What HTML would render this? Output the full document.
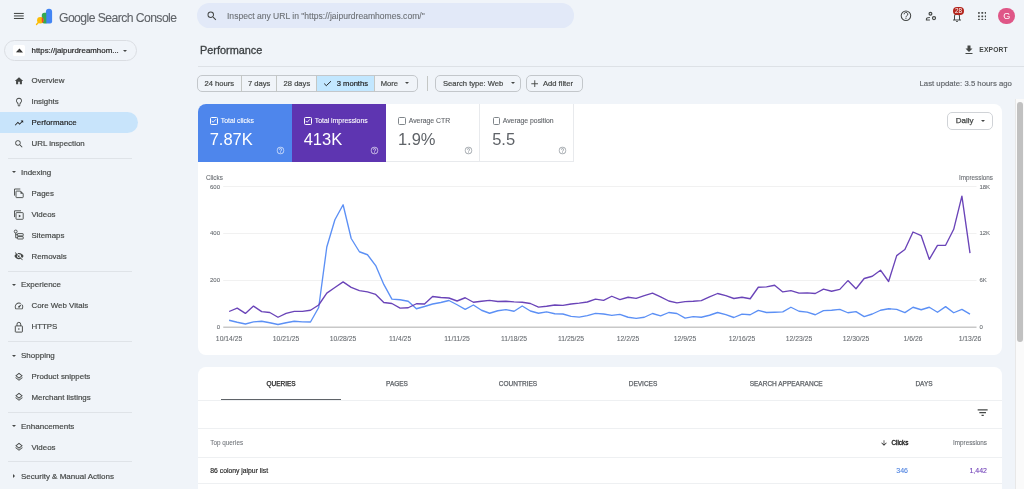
<!DOCTYPE html>
<html><head><meta charset="utf-8">
<style>
*{box-sizing:border-box;margin:0;padding:0}
html,body{width:1024px;height:489px;overflow:hidden;background:#f0f4f9;font-family:"Liberation Sans",sans-serif;color:#1f1f1f}
.a{position:absolute;white-space:nowrap}
.nav{font-size:7.9px;color:#444746;left:31.5px;line-height:10px;-webkit-text-stroke:0.18px currentColor}
.navi{position:absolute;left:13.9px;width:10px;height:10px}
.sec{font-size:8px;color:#444746;left:21px;line-height:10px;-webkit-text-stroke:0.18px currentColor}
.tri{position:absolute;left:11.5px;width:0;height:0;border-left:2.2px solid transparent;border-right:2.2px solid transparent;border-top:2.4px solid #444746}
.div{position:absolute;left:8px;width:124px;height:1px;background:#dfe3e8}
.chip{position:absolute;top:75px;height:16.5px;border:1px solid #c3c7cb;border-radius:5px;background:#f0f4f9}
.ct{font-size:7.6px;color:#444746;line-height:14.5px;-webkit-text-stroke:0.2px currentColor}
.card{position:absolute;background:#fff;border-radius:8px}
.mlab{font-size:6.85px;line-height:9px;-webkit-text-stroke:0.1px currentColor}
.mval{font-size:16.5px;line-height:18px}
.ylab{font-size:6px;color:#6a6e73;line-height:8px;-webkit-text-stroke:0.1px currentColor}
.xlab{font-size:6.8px;color:#6a6e73;line-height:8px;-webkit-text-stroke:0.1px currentColor}
.tab{font-size:6.5px;color:#5f6368;line-height:8px;-webkit-text-stroke:0.25px currentColor}
#root{position:absolute;left:0;top:0;width:1024px;height:489px;overflow:hidden;will-change:transform}
</style></head><body><div id="root">
<!-- top bar -->
<svg class="a" style="left:0;top:0" width="32" height="32" viewBox="0 0 32 32"><g stroke="#444746" stroke-width="1.05"><line x1="13.93" y1="13.44" x2="23.73" y2="13.44"/><line x1="13.93" y1="15.93" x2="23.73" y2="15.93"/><line x1="13.93" y1="18.47" x2="23.73" y2="18.47"/></g></svg>
<svg class="a" style="left:34px;top:6px" width="20" height="20" viewBox="34 6 20 20">
 <defs><clipPath id="gc"><path d="M44.3 12.8H46.3V23.6H44.3A2.5 2.5 0 0 1 41.8 21.1V15.3A2.5 2.5 0 0 1 44.3 12.8z"/></clipPath></defs>
 <path d="M45.9 11.8A3.1 3.1 0 0 1 52.1 11.8V21.6A2 2 0 0 1 50.1 23.6H45.9z" fill="#4285f4"/>
 <path d="M44.3 12.8H46.3V23.6H44.3A2.5 2.5 0 0 1 41.8 21.1V15.3A2.5 2.5 0 0 1 44.3 12.8z" fill="#34a853"/>
 <line x1="36.5" y1="24.5" x2="38.4" y2="22.6" stroke="#fbbc04" stroke-width="1.4" stroke-linecap="round"/>
 <circle cx="40.3" cy="20.2" r="3.2" fill="#fbbc04"/>
 <circle cx="40.3" cy="20.2" r="3.2" fill="#ea4335" clip-path="url(#gc)"/>
</svg>
<div class="a" style="left:59px;top:11px;font-size:12.2px;letter-spacing:-0.57px;color:#5f6368;line-height:14px;-webkit-text-stroke:0.1px currentColor">Google Search Console</div>
<div class="a" style="left:197px;top:3.4px;width:377.3px;height:24.7px;border-radius:12.35px;background:#e2e9f8"></div>
<svg class="a" style="left:206px;top:10.4px" width="12" height="12" viewBox="0 0 24 24"><path d="M15.5 14h-.79l-.28-.27A6.47 6.47 0 0 0 16 9.5 6.5 6.5 0 1 0 9.5 16c1.61 0 3.09-.59 4.23-1.57l.27.28v.79l5 4.99L20.49 19l-4.99-5zm-6 0C7.01 14 5 11.99 5 9.5S7.01 5 9.5 5 14 7.01 14 9.5 11.99 14 9.5 14z" fill="#444746"/></svg>
<div class="a" style="left:227px;top:10.5px;font-size:8.56px;color:#6c7075;line-height:11px;-webkit-text-stroke:0.1px currentColor">Inspect any URL in "https://jaipurdreamhomes.com/"</div>
<!-- right icons -->
<svg class="a" style="left:898px;top:8px" width="16" height="16" viewBox="898 8 16 16"><circle cx="905.95" cy="15.8" r="4.75" fill="none" stroke="#444746" stroke-width="1.05"/><path d="M904.1 14.3a1.85 1.85 0 1 1 2.6 1.65c-.5.25-.75.6-.75 1.2v.3" fill="none" stroke="#444746" stroke-width="0.95"/><circle cx="905.95" cy="18.5" r="0.6" fill="#444746"/></svg>
<svg class="a" style="left:924px;top:9px" width="14" height="13" viewBox="924 9 14 13"><g fill="none" stroke="#444746"><circle cx="930.45" cy="13.75" r="1.4" stroke-width="1.2"/><path d="M929.9 17.4c-1.9 0-3.5.6-3.5 1.6v.9h3.5" stroke-width="1.05"/><circle cx="934" cy="18.1" r="1.55" stroke-width="1.15"/></g></svg>
<svg class="a" style="left:950.5px;top:10.5px" width="12" height="12" viewBox="0 0 24 24"><path d="M12 22c1.1 0 2-.9 2-2h-4c0 1.1.89 2 2 2zm6-6v-5c0-3.07-1.64-5.64-4.5-6.32V4c0-.83-.67-1.5-1.5-1.5s-1.5.67-1.5 1.5v.68C7.630 5.36 6 7.92 6 11v5l-2 2v1h16v-1l-2-2zm-2 1H8v-6c0-2.48 1.51-4.5 4-4.5s4 2.02 4 4.5v6z" fill="#444746"/></svg>
<div class="a" style="left:953px;top:7px;width:11.2px;height:7.8px;border-radius:3.9px;background:#b3261e;color:#fff;font-size:6.3px;line-height:7.8px;text-align:center">28</div>
<svg class="a" style="left:977.6px;top:11.5px" width="8.6" height="8.6" viewBox="0 0 8.6 8.6"><g fill="#444746"><rect x="0" y="0" width="1.8" height="1.8" rx="0.4"/><rect x="3.4" y="0" width="1.8" height="1.8" rx="0.4"/><rect x="6.8" y="0" width="1.8" height="1.8" rx="0.4"/><rect x="0" y="3.4" width="1.8" height="1.8" rx="0.4"/><rect x="3.4" y="3.4" width="1.8" height="1.8" rx="0.4"/><rect x="6.8" y="3.4" width="1.8" height="1.8" rx="0.4"/><rect x="0" y="6.8" width="1.8" height="1.8" rx="0.4"/><rect x="3.4" y="6.8" width="1.8" height="1.8" rx="0.4"/><rect x="6.8" y="6.8" width="1.8" height="1.8" rx="0.4"/></g></svg>
<div class="a" style="left:998.3px;top:7.7px;width:16.8px;height:16.8px;border-radius:50%;background:#df5687;color:#fff;font-size:9px;line-height:16.8px;text-align:center">G</div>

<!-- sidebar -->
<div class="a" style="left:4.1px;top:40px;width:133.4px;height:21.3px;border:1px solid #dadde2;border-radius:10.6px"></div>
<div class="a" style="left:13px;top:45px;width:12px;height:11px;background:#fff;border-radius:1.5px"></div>
<svg class="a" style="left:15px;top:47px" width="9" height="7" viewBox="0 0 9 7"><path d="M0.9 5.2L3.3 2.8 4.3 1.5 5.4 2.5 8 5.4 6 5.6z" fill="#333"/><path d="M3.6 3.2L5.2 5.3" stroke="#888" stroke-width="0.5"/></svg>
<div class="a nav" style="top:45.5px;color:#1f1f1f">https://jaipurdreamhom...</div>
<div class="tri" style="left:122.5px;top:49.5px;border-top-color:#444746;border-left-width:2.6px;border-right-width:2.6px;border-top-width:2.8px"></div>

<div class="a" style="left:0;top:112.2px;width:138px;height:20.9px;border-radius:0 10.5px 10.5px 0;background:#c8e4fb"></div>
<svg class="navi" style="left:13.90px;top:75.60px" viewBox="0 0 24 24"><path d="M10 20v-6h4v6h5v-8h3L12 3 2 12h3v8z" fill="#444746"/></svg><div class="a nav" style="top:76.00px;color:#444746">Overview</div>
<svg class="navi" style="left:13.90px;top:96.70px" viewBox="0 0 24 24"><path d="M9 21c0 .55.45 1 1 1h4c.55 0 1-.45 1-1v-1H9v1zm3-19C8.14 2 5 5.14 5 9c0 2.38 1.19 4.47 3 5.74V17c0 .55.45 1 1 1h6c.55 0 1-.45 1-1v-2.26c1.81-1.27 3-3.36 3-5.74 0-3.86-3.14-7-7-7zm2.85 11.1l-.85.6V16h-4v-2.3l-.85-.6A4.997 4.997 0 0 1 7 9c0-2.76 2.24-5 5-5s5 2.24 5 5c0 1.63-.8 3.16-2.15 4.1z" fill="#444746"/></svg><div class="a nav" style="top:97.10px;color:#444746">Insights</div>
<svg class="navi" style="left:13.90px;top:117.50px" viewBox="0 0 24 24"><path d="M16 6l2.29 2.29-4.88 4.88-4-4L2 16.59 3.41 18l6-6 4 4 6.3-6.29L22 12V6z" fill="#1f1f1f"/></svg><div class="a nav" style="top:117.90px;color:#1f1f1f">Performance</div>
<svg class="navi" style="left:13.90px;top:138.50px" viewBox="0 0 24 24"><path d="M15.5 14h-.79l-.28-.27A6.47 6.47 0 0 0 16 9.5 6.5 6.5 0 1 0 9.5 16c1.61 0 3.09-.59 4.23-1.57l.27.28v.79l5 4.99L20.49 19l-4.99-5zm-6 0C7.01 14 5 11.99 5 9.5S7.01 5 9.5 5 14 7.01 14 9.5 11.99 14 9.5 14z" fill="#444746"/></svg><div class="a nav" style="top:138.90px;color:#444746">URL inspection</div>
<div class="div" style="top:157.60px"></div>
<div class="tri" style="top:171.40px"></div><div class="a sec" style="top:168.00px">Indexing</div>
<svg class="a" style="left:13px;top:187.40px" width="12" height="12" viewBox="0 0 12 12"><g fill="none" stroke="#444746" stroke-width="0.9"><path d="M1.5 8.6V2H7.3"/><path d="M3.5 4.1H7.5L10.2 6.8V10.1A.5 .5 0 0 1 9.7 10.6H3.5A.5 .5 0 0 1 3 10.1V4.6A.5 .5 0 0 1 3.5 4.1z"/></g><path d="M7.5 4.1L10.2 6.8H7.5z" fill="#444746"/></svg><div class="a nav" style="top:188.80px;color:#444746">Pages</div>
<svg class="a" style="left:13px;top:208.50px" width="12" height="12" viewBox="0 0 12 12"><g fill="none" stroke="#444746" stroke-width="0.9"><path d="M1.5 8.1V1.8H8"/><rect x="3" y="3.6" width="7.2" height="6.7" rx="0.6"/></g><path d="M5.8 5.5V8.4L8 6.95z" fill="#444746"/></svg><div class="a nav" style="top:209.90px;color:#444746">Videos</div>
<svg class="a" style="left:13px;top:229.35px" width="12" height="12" viewBox="0 0 12 12"><g fill="none" stroke="#444746" stroke-width="0.9"><rect x="1.3" y="1.1" width="2.8" height="2.8" rx="1.2"/><path d="M2.7 3.9V8.8H4.4M2.7 5.7H4.4"/><rect x="4.4" y="4.6" width="5.8" height="2.3" rx="0.4"/><rect x="4.4" y="7.6" width="5.8" height="2.4" rx="0.4"/></g></svg><div class="a nav" style="top:230.75px;color:#444746">Sitemaps</div>
<svg class="navi" style="left:13.90px;top:251.25px" viewBox="0 0 24 24"><path d="M12 7c2.76 0 5 2.24 5 5 0 .65-.13 1.26-.36 1.83l2.92 2.92c1.51-1.26 2.7-2.89 3.43-4.75-1.73-4.39-6-7.5-11-7.5-1.4 0-2.74.25-3.98.7l2.16 2.16C10.74 7.130 11.35 7 12 7zM2 4.27l2.28 2.28.46.46A11.804 11.804 0 0 0 1 12c1.73 4.39 6 7.5 11 7.5 1.55 0 3.03-.3 4.38-.84l.42.42L19.730 22 21 20.73 3.27 3 2 4.27zM7.53 9.8l1.55 1.55c-.05.21-.08.43-.08.65 0 1.66 1.34 3 3 3 .22 0 .44-.03.65-.08l1.550 1.55c-.67.33-1.41.53-2.2.53-2.76 0-5-2.24-5-5 0-.79.2-1.53.53-2.2zm4.31-.78l3.15 3.15.02-.16c0-1.66-1.34-3-3-3l-.17.01z" fill="#444746"/></svg><div class="a nav" style="top:251.65px;color:#444746">Removals</div>
<div class="div" style="top:270.50px"></div>
<div class="tri" style="top:283.70px"></div><div class="a sec" style="top:280.30px">Experience</div>
<svg class="navi" style="left:13.90px;top:300.80px" viewBox="0 0 24 24"><path d="M20.38 8.57l-1.23 1.85a8 8 0 0 1-.22 7.58H5.07A8 8 0 0 1 15.58 6.85l1.85-1.23A10 10 0 0 0 3.35 19a2 2 0 0 0 1.720 1h13.85a2 2 0 0 0 1.74-1 10 10 0 0 0-.27-10.44zm-9.79 6.84a2 2 0 0 0 2.83 0l5.66-8.49-8.49 5.66a2 2 0 0 0 0 2.83z" fill="#444746"/></svg><div class="a nav" style="top:301.20px;color:#444746">Core Web Vitals</div>
<svg class="a" style="left:13px;top:320.50px" width="12" height="12" viewBox="0 0 12 12"><g fill="none" stroke="#444746" stroke-width="0.95"><rect x="2.3" y="4.9" width="7.1" height="6.2" rx="0.5"/><path d="M4 4.9V3.2A1.85 1.85 0 0 1 7.7 3.2V4.9"/></g><circle cx="5.85" cy="8" r="0.8" fill="#444746"/></svg><div class="a nav" style="top:321.90px;color:#444746">HTTPS</div>
<div class="div" style="top:340.50px"></div>
<div class="tri" style="top:354.60px"></div><div class="a sec" style="top:351.20px">Shopping</div>
<svg class="navi" style="left:13.90px;top:371.50px" viewBox="0 0 24 24"><path d="M11.99 18.54l-7.37-5.73L3 14.070l9 7 9-7-1.63-1.27-7.38 5.74zM12 16l7.36-5.73L21 9l-9-7-9 7 1.63 1.27L12 16zm0-11.47L17.74 9 12 13.47 6.26 9 12 4.53z" fill="#444746"/></svg><div class="a nav" style="top:371.90px;color:#444746">Product snippets</div>
<svg class="navi" style="left:13.90px;top:392.45px" viewBox="0 0 24 24"><path d="M11.99 18.54l-7.37-5.73L3 14.070l9 7 9-7-1.63-1.27-7.38 5.74zM12 16l7.36-5.73L21 9l-9-7-9 7 1.63 1.27L12 16zm0-11.47L17.74 9 12 13.47 6.26 9 12 4.53z" fill="#444746"/></svg><div class="a nav" style="top:392.85px;color:#444746">Merchant listings</div>
<div class="div" style="top:411.80px"></div>
<div class="tri" style="top:424.95px"></div><div class="a sec" style="top:421.55px">Enhancements</div>
<svg class="navi" style="left:13.90px;top:442.15px" viewBox="0 0 24 24"><path d="M11.99 18.54l-7.37-5.73L3 14.070l9 7 9-7-1.63-1.27-7.38 5.74zM12 16l7.36-5.73L21 9l-9-7-9 7 1.63 1.27L12 16zm0-11.47L17.74 9 12 13.47 6.26 9 12 4.53z" fill="#444746"/></svg><div class="a nav" style="top:442.55px;color:#444746">Videos</div>
<div class="div" style="top:461.00px"></div>
<div class="a" style="left:12.8px;top:474.10px;width:0;height:0;border-top:2.2px solid transparent;border-bottom:2.2px solid transparent;border-left:2.4px solid #444746"></div><div class="a sec" style="top:471.70px">Security &amp; Manual Actions</div>


<!-- main header -->
<div class="a" style="left:200px;top:44.3px;font-size:10.9px;color:#3c4043;line-height:13px;-webkit-text-stroke:0.3px currentColor">Performance</div>
<svg class="a" style="left:962.6px;top:44px" width="12" height="12" viewBox="0 0 24 24"><path d="M19 9h-4V3H9v6H5l7 7 7-7zM5 18v2h14v-2H5z" fill="#444746"/></svg>
<div class="a" style="left:979.3px;top:45px;font-size:6.7px;font-weight:bold;color:#444746;line-height:9px;letter-spacing:0.15px">EXPORT</div>
<div class="a" style="left:197.5px;top:66px;width:827px;height:1px;background:#dde1e6"></div>

<div class="chip" style="left:197.2px;width:221.3px"></div><div class="a" style="left:316.3px;top:76px;width:58.2px;height:14.5px;background:#c2e7ff"></div><div class="a" style="left:240.80px;top:75px;width:1px;height:16.5px;background:#c4c7c5"></div><div class="a" style="left:276.20px;top:75px;width:1px;height:16.5px;background:#c4c7c5"></div><div class="a" style="left:315.80px;top:75px;width:1px;height:16.5px;background:#c4c7c5"></div><div class="a" style="left:374.00px;top:75px;width:1px;height:16.5px;background:#c4c7c5"></div><div class="a ct" style="left:204.5px;top:76.7px;color:#444746">24 hours</div><div class="a ct" style="left:248px;top:76.7px;color:#444746">7 days</div><div class="a ct" style="left:283.6px;top:76.7px;color:#444746">28 days</div><div class="a ct" style="left:336.75px;top:76.7px;color:#1f1f1f">3 months</div><div class="a ct" style="left:380.75px;top:76.7px;color:#444746">More</div><svg class="a" style="left:323px;top:80px" width="9" height="7" viewBox="0 0 9 7"><path d="M1.2 3.6l2.1 2.1L8 1.2" fill="none" stroke="#1f1f1f" stroke-width="0.95"/></svg><div class="tri" style="left:405px;top:82.3px;border-left-width:2.2px;border-right-width:2.2px;border-top-width:2.4px"></div><div class="a" style="left:426.5px;top:76px;width:1px;height:14.5px;background:#c4c7c5"></div><div class="chip" style="left:435px;width:86.25px"></div><div class="a ct" style="left:443px;top:76.7px;color:#444746">Search type: Web</div><div class="tri" style="left:510.5px;top:82.3px;border-left-width:2.2px;border-right-width:2.2px;border-top-width:2.4px"></div><div class="chip" style="left:525.5px;width:57.5px"></div><div class="a ct" style="left:543px;top:76.7px;color:#444746">Add filter</div><svg class="a" style="left:530.5px;top:79.5px" width="7.5" height="7.5" viewBox="0 0 8 8"><path d="M4 0.3v7.4M0.3 4h7.4" stroke="#444746" stroke-width="1"/></svg>

<div class="a" style="left:919.5px;top:78.5px;font-size:7.77px;color:#5f6368;line-height:10px;-webkit-text-stroke:0.15px currentColor">Last update: 3.5 hours ago</div>

<!-- scrollbar -->
<div class="a" style="left:1014.5px;top:99px;width:9.5px;height:390px;background:#fafafa;border-left:1px solid #e8e8e8"></div>
<div class="a" style="left:1016.8px;top:101.8px;width:6px;height:240.5px;border-radius:3px;background:#c1c1c1"></div>

<!-- performance card -->
<div class="card" style="left:197.5px;top:104px;width:804.5px;height:250.5px"></div>
<div class="a" style="left:197.5px;top:104px;width:94.25px;height:57.5px;background:#4e86ec;border-radius:8px 0 0 0"></div><div class="a" style="left:291.75px;top:104px;width:94px;height:57.5px;background:#5e35b1"></div><div class="a" style="left:385.75px;top:104px;width:188px;height:57.5px;border-right:1px solid #e8eaed;border-bottom:1px solid #e8eaed"></div><div class="a" style="left:479px;top:104px;width:1px;height:57.5px;background:#e8eaed"></div><div class="a" style="left:210px;top:117.4px;width:7.5px;height:7.5px;border:1px solid #fff;border-radius:1.5px"></div><svg class="a" style="left:210px;top:117.4px" width="7.5" height="7.5" viewBox="0 0 8 8"><path d="M1.8 4.1l1.5 1.5 3-3.2" fill="none" stroke="#fff" stroke-width="0.9"/></svg><div class="a mlab" style="left:220.75px;top:116.4px;color:#fff">Total clicks</div><div class="a mval" style="left:209.7px;top:130.4px;color:#fff">7.87K</div><svg class="a" style="left:276.25px;top:146.0px" width="9" height="9" viewBox="0 0 24 24"><path d="M11 18h2v-2h-2v2zm1-16C6.48 2 2 6.48 2 12s4.48 10 10 10 10-4.48 10-10S17.52 2 12 2zm0 18c-4.41 0-8-3.59-8-8s3.59-8 8-8 8 3.590 8 8-3.59 8-8 8zm0-14c-2.21 0-4 1.79-4 4h2c0-1.1.9-2 2-2s2 .9 2 2c0 2-3 1.75-3 5h2c0-2.25 3-2.5 3-5 0-2.21-1.79-4-4-4z" fill="rgba(255,255,255,0.75)"/></svg><div class="a" style="left:304px;top:117.4px;width:7.5px;height:7.5px;border:1px solid #fff;border-radius:1.5px"></div><svg class="a" style="left:304px;top:117.4px" width="7.5" height="7.5" viewBox="0 0 8 8"><path d="M1.8 4.1l1.5 1.5 3-3.2" fill="none" stroke="#fff" stroke-width="0.9"/></svg><div class="a mlab" style="left:314.75px;top:116.4px;color:#fff">Total impressions</div><div class="a mval" style="left:303.7px;top:130.4px;color:#fff">413K</div><svg class="a" style="left:370.25px;top:146.0px" width="9" height="9" viewBox="0 0 24 24"><path d="M11 18h2v-2h-2v2zm1-16C6.48 2 2 6.48 2 12s4.48 10 10 10 10-4.48 10-10S17.52 2 12 2zm0 18c-4.41 0-8-3.59-8-8s3.59-8 8-8 8 3.590 8 8-3.59 8-8 8zm0-14c-2.21 0-4 1.79-4 4h2c0-1.1.9-2 2-2s2 .9 2 2c0 2-3 1.75-3 5h2c0-2.25 3-2.5 3-5 0-2.21-1.79-4-4-4z" fill="rgba(255,255,255,0.75)"/></svg><div class="a" style="left:398.25px;top:117.4px;width:7.5px;height:7.5px;border:1px solid #80868b;border-radius:1.5px"></div><div class="a mlab" style="left:408.75px;top:116.4px;color:#5f6368">Average CTR</div><div class="a mval" style="left:397.95px;top:130.4px;color:#5f6368">1.9%</div><svg class="a" style="left:464.4px;top:146.0px" width="9" height="9" viewBox="0 0 24 24"><path d="M11 18h2v-2h-2v2zm1-16C6.48 2 2 6.48 2 12s4.48 10 10 10 10-4.48 10-10S17.52 2 12 2zm0 18c-4.41 0-8-3.59-8-8s3.59-8 8-8 8 3.590 8 8-3.59 8-8 8zm0-14c-2.21 0-4 1.79-4 4h2c0-1.1.9-2 2-2s2 .9 2 2c0 2-3 1.75-3 5h2c0-2.25 3-2.5 3-5 0-2.21-1.79-4-4-4z" fill="#9aa0a6"/></svg><div class="a" style="left:492.5px;top:117.4px;width:7.5px;height:7.5px;border:1px solid #80868b;border-radius:1.5px"></div><div class="a mlab" style="left:502.75px;top:116.4px;color:#5f6368">Average position</div><div class="a mval" style="left:492.2px;top:130.4px;color:#5f6368">5.5</div><svg class="a" style="left:558.4px;top:146.0px" width="9" height="9" viewBox="0 0 24 24"><path d="M11 18h2v-2h-2v2zm1-16C6.48 2 2 6.48 2 12s4.48 10 10 10 10-4.48 10-10S17.52 2 12 2zm0 18c-4.41 0-8-3.59-8-8s3.59-8 8-8 8 3.590 8 8-3.59 8-8 8zm0-14c-2.21 0-4 1.79-4 4h2c0-1.1.9-2 2-2s2 .9 2 2c0 2-3 1.75-3 5h2c0-2.25 3-2.5 3-5 0-2.21-1.79-4-4-4z" fill="#9aa0a6"/></svg>
<div class="a" style="left:947.2px;top:112.2px;width:46.2px;height:17.6px;border:1px solid #d0d3d7;border-radius:5px"></div>
<div class="a" style="left:955.8px;top:116.1px;font-size:8px;color:#444746;line-height:10px;-webkit-text-stroke:0.25px currentColor">Daily</div>
<div class="tri" style="left:980.9px;top:120px;border-left-width:2.2px;border-right-width:2.2px;border-top-width:2.75px"></div>

<div class="a ylab" style="left:206px;top:174px;font-size:6.3px">Clicks</div><div class="a ylab" style="left:959px;top:174px;font-size:6.3px">Impressions</div><svg class="a" style="left:0;top:0" width="1024" height="489"><line x1="223.25" y1="186.5" x2="976.5" y2="186.5" stroke="#f1f1f1" stroke-width="1"/><line x1="223.25" y1="233.5" x2="976.5" y2="233.5" stroke="#f1f1f1" stroke-width="1"/><line x1="223.25" y1="280.5" x2="976.5" y2="280.5" stroke="#f1f1f1" stroke-width="1"/><line x1="223.25" y1="327.2" x2="976.5" y2="327.2" stroke="#c8c8c8" stroke-width="1.6"/><polyline points="229.1,320.25 237.2,322.25 245.4,324.00 253.5,321.90 261.7,321.25 269.8,322.75 278.0,324.50 286.1,322.75 294.2,321.25 302.4,321.90 310.5,322.00 318.7,307.50 326.8,247.00 334.9,219.75 343.1,204.75 351.2,238.50 359.4,251.75 367.5,254.75 375.7,265.60 383.8,284.40 391.9,299.10 400.1,299.75 408.2,301.25 416.4,308.75 424.5,306.50 432.6,304.00 440.8,302.50 448.9,300.50 457.1,304.75 465.2,309.40 473.4,305.00 481.5,310.25 489.6,313.25 497.8,310.75 505.9,309.60 514.1,311.25 522.2,306.00 530.4,311.00 538.5,313.25 546.6,311.90 554.8,313.75 562.9,314.00 571.1,316.40 579.2,317.10 587.3,315.60 595.5,313.40 603.6,314.00 611.8,315.40 619.9,314.40 628.1,317.25 636.2,318.40 644.3,317.25 652.5,313.50 660.6,315.90 668.8,312.50 676.9,313.50 685.1,318.10 693.2,316.60 701.3,317.25 709.5,315.25 717.6,312.50 725.8,314.60 733.9,317.50 742.0,314.10 750.2,314.75 758.3,310.40 766.5,312.50 774.6,312.25 782.8,311.90 790.9,307.25 799.0,311.25 807.2,312.10 815.3,314.75 823.5,310.60 831.6,310.25 839.8,309.40 847.9,312.75 856.0,311.60 864.2,316.60 872.3,314.00 880.5,310.25 888.6,308.75 896.7,309.40 904.9,312.60 913.0,307.25 921.2,309.75 929.3,307.25 937.5,312.25 945.6,306.60 953.7,312.75 961.9,309.40 970.0,314.10" fill="none" stroke="#5c90f5" stroke-width="1.35" stroke-linejoin="round"/><polyline points="229.1,311.50 237.2,308.10 245.4,313.40 253.5,306.10 261.7,311.60 269.8,312.50 278.0,317.25 286.1,313.40 294.2,311.40 302.4,311.40 310.5,310.25 318.7,305.00 326.8,293.10 334.9,287.50 343.1,281.90 351.2,287.40 359.4,290.60 367.5,291.90 375.7,294.40 383.8,302.50 391.9,303.50 400.1,308.10 408.2,307.75 416.4,303.75 424.5,304.00 432.6,296.50 440.8,297.50 448.9,298.00 457.1,301.00 465.2,297.75 473.4,302.25 481.5,301.25 489.6,300.40 497.8,301.50 505.9,301.25 514.1,301.90 522.2,302.25 530.4,303.50 538.5,307.10 546.6,306.25 554.8,305.00 562.9,305.40 571.1,304.00 579.2,303.10 587.3,302.00 595.5,299.10 603.6,300.40 611.8,296.25 619.9,299.60 628.1,297.25 636.2,298.40 644.3,295.60 652.5,293.10 660.6,296.90 668.8,301.00 676.9,302.90 685.1,301.70 693.2,301.25 701.3,300.60 709.5,296.90 717.6,293.50 725.8,295.60 733.9,298.50 742.0,297.25 750.2,298.75 758.3,287.25 766.5,286.90 774.6,285.25 782.8,291.90 790.9,290.60 799.0,293.10 807.2,292.80 815.3,293.50 823.5,289.10 831.6,291.25 839.8,289.40 847.9,280.60 856.0,288.75 864.2,278.50 872.3,276.25 880.5,270.20 888.6,281.50 896.7,255.60 904.9,249.50 913.0,232.00 921.2,235.70 929.3,259.30 937.5,245.30 945.6,245.30 953.7,229.30 961.9,196.10 970.0,253.20" fill="none" stroke="#6a44b8" stroke-width="1.35" stroke-linejoin="round"/></svg><div class="a ylab" style="left:180px;width:40px;text-align:right;top:182.70px">600</div><div class="a ylab" style="left:979.4px;top:182.70px">18K</div><div class="a ylab" style="left:180px;width:40px;text-align:right;top:229.40px">400</div><div class="a ylab" style="left:979.4px;top:229.40px">12K</div><div class="a ylab" style="left:180px;width:40px;text-align:right;top:276.10px">200</div><div class="a ylab" style="left:979.4px;top:276.10px">6K</div><div class="a ylab" style="left:180px;width:40px;text-align:right;top:323.10px">0</div><div class="a ylab" style="left:979.4px;top:323.10px">0</div><div class="a xlab" style="left:199.10px;width:60px;text-align:center;top:334.5px">10/14/25</div><div class="a xlab" style="left:256.09px;width:60px;text-align:center;top:334.5px">10/21/25</div><div class="a xlab" style="left:313.09px;width:60px;text-align:center;top:334.5px">10/28/25</div><div class="a xlab" style="left:370.08px;width:60px;text-align:center;top:334.5px">11/4/25</div><div class="a xlab" style="left:427.08px;width:60px;text-align:center;top:334.5px">11/11/25</div><div class="a xlab" style="left:484.07px;width:60px;text-align:center;top:334.5px">11/18/25</div><div class="a xlab" style="left:541.06px;width:60px;text-align:center;top:334.5px">11/25/25</div><div class="a xlab" style="left:598.06px;width:60px;text-align:center;top:334.5px">12/2/25</div><div class="a xlab" style="left:655.05px;width:60px;text-align:center;top:334.5px">12/9/25</div><div class="a xlab" style="left:712.05px;width:60px;text-align:center;top:334.5px">12/16/25</div><div class="a xlab" style="left:769.04px;width:60px;text-align:center;top:334.5px">12/23/25</div><div class="a xlab" style="left:826.03px;width:60px;text-align:center;top:334.5px">12/30/25</div><div class="a xlab" style="left:883.03px;width:60px;text-align:center;top:334.5px">1/6/26</div><div class="a xlab" style="left:940.02px;width:60px;text-align:center;top:334.5px">1/13/26</div>

<!-- table card -->
<div class="card" style="left:197.5px;top:367.2px;width:804.5px;height:140px"></div>
<div class="a tab" style="left:221.10000000000002px;width:120px;text-align:center;top:380.2px;color:#1f1f1f">QUERIES</div><div class="a tab" style="left:337px;width:120px;text-align:center;top:380.2px;color:#5f6368">PAGES</div><div class="a tab" style="left:458px;width:120px;text-align:center;top:380.2px;color:#5f6368">COUNTRIES</div><div class="a tab" style="left:583px;width:120px;text-align:center;top:380.2px;color:#5f6368">DEVICES</div><div class="a tab" style="left:726.2px;width:120px;text-align:center;top:380.2px;color:#5f6368">SEARCH APPEARANCE</div><div class="a tab" style="left:864px;width:120px;text-align:center;top:380.2px;color:#5f6368">DAYS</div><div class="a" style="left:221.1px;top:399.3px;width:119.5px;height:2px;background:#5f6368"></div><div class="a" style="left:197.5px;top:400.1px;width:804.5px;height:1px;background:#eef0f2"></div><div class="a" style="left:197.5px;top:427.6px;width:804.5px;height:1px;background:#eef0f2"></div><div class="a" style="left:197.5px;top:456.7px;width:804.5px;height:1px;background:#eef0f2"></div><div class="a" style="left:197.5px;top:483.25px;width:804.5px;height:1px;background:#eef0f2"></div><svg class="a" style="left:975.8px;top:405.6px" width="13.3" height="13.3" viewBox="0 0 24 24"><path d="M10 18h4v-2h-4v2zM3 6v2h18V6H3zm3 7h12v-2H6v2z" fill="#444746"/></svg><div class="a" style="left:210.3px;top:438.8px;font-size:6.35px;color:#6f7378;line-height:8px;-webkit-text-stroke:0.05px currentColor">Top queries</div><svg class="a" style="left:879.5px;top:438.5px" width="8" height="8" viewBox="0 0 24 24"><path d="M20 12l-1.41-1.41L13 16.17V4h-2v12.17l-5.58-5.59L4 12l8 8 8-8z" fill="#1f1f1f"/></svg><div class="a" style="left:848px;width:60.3px;text-align:right;top:438.6px;font-size:6.3px;color:#1f1f1f;line-height:8px;-webkit-text-stroke:0.35px currentColor">Clicks</div><div class="a" style="left:927px;width:60px;text-align:right;top:438.6px;font-size:6.3px;color:#6f7378;line-height:8px;-webkit-text-stroke:0.1px currentColor">Impressions</div><div class="a" style="left:210.3px;top:465.8px;font-size:6.8px;color:#1f1f1f;line-height:9px;-webkit-text-stroke:0.15px currentColor">86 colony jaipur list</div><div class="a" style="left:848px;width:60px;text-align:right;top:465.8px;font-size:7px;color:#4d82e0;line-height:9px;-webkit-text-stroke:0.1px currentColor">346</div><div class="a" style="left:927px;width:60px;text-align:right;top:465.8px;font-size:7px;color:#7140b8;line-height:9px;-webkit-text-stroke:0.1px currentColor">1,442</div>
</div></body></html>
